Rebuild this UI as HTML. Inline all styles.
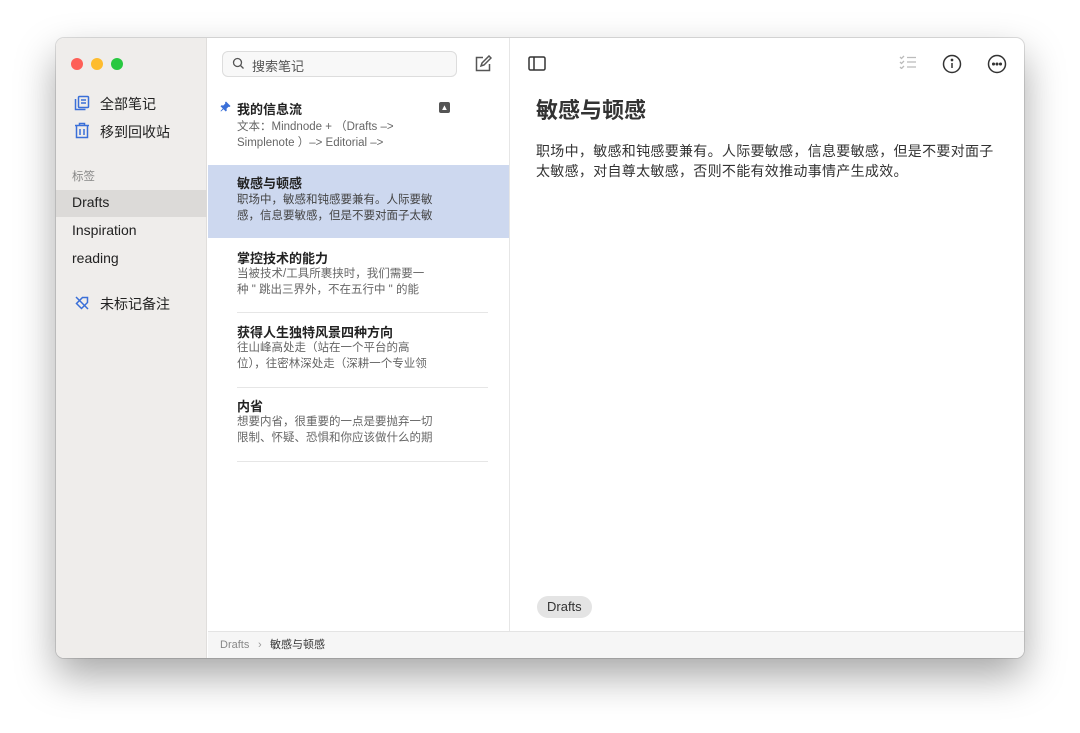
<!DOCTYPE html>
<html><head><meta charset="utf-8"><style>
*{margin:0;padding:0;box-sizing:border-box}
body{width:1080px;height:733px;background:#fff;font-family:"Liberation Sans","Noto Sans CJK SC",sans-serif;position:relative;overflow:hidden;color:#222}
.win{position:absolute;left:56px;top:38px;width:968px;height:620px;border-radius:8px;overflow:hidden;box-shadow:0 18px 40px rgba(0,0,0,.35),0 0 0 1px rgba(0,0,0,.12);background:#fff}
.side{position:absolute;left:0;top:0;width:151px;height:620px;background:#efedeb;border-right:1px solid #e0dedc}
.dot{position:absolute;top:20px;width:12px;height:12px;border-radius:50%}
.abs{position:absolute;white-space:nowrap}
.list{position:absolute;left:152px;top:0;width:302px;height:593px;border-right:1px solid #e6e6e6}
.t{font-size:13px;font-weight:bold;color:#222}
.s{font-size:11.5px;color:#666;line-height:16px}
.hr{position:absolute;left:29px;width:251px;height:1px;background:#e6e6e6}
.foot{position:absolute;left:152px;top:593px;width:816px;height:27px;background:#f6f6f6;border-top:1px solid #e4e4e4;font-size:11px}
.foot span{line-height:26px;top:0}
</style></head><body>
<div class="win">
 <div class="side">
  <div class="dot" style="left:15px;background:#fe5f57"></div>
  <div class="dot" style="left:35px;background:#febc2e"></div>
  <div class="dot" style="left:55px;background:#28c840"></div>
  <svg class="abs" style="left:18px;top:57px" width="16" height="16" viewBox="0 0 16 16" fill="none" stroke="#3a6fd8" stroke-width="1.5"><rect x="4.5" y="1.5" width="10" height="11" rx="1"/><path d="M1.5 4v10.5h10M7 5h5M7 8h5"/></svg>
  <div class="abs" style="left:44px;top:56px;font-size:14px">全部笔记</div>
  <svg class="abs" style="left:18px;top:84px" width="16" height="17" viewBox="0 0 16 17" fill="none" stroke="#3a6fd8" stroke-width="1.5"><path d="M1 3.5h14M5.5 3.5V1.5h5v2M2.5 3.5V15.5h11V3.5M6 7v6M10 7v6"/></svg>
  <div class="abs" style="left:44px;top:84px;font-size:14px">移到回收站</div>
  <div class="abs" style="left:16px;top:130px;font-size:11.5px;color:#888">标签</div>
  <div style="position:absolute;left:0;top:152px;width:151px;height:27px;background:#dcdad8"></div>
  <div class="abs" style="left:16px;top:156px;font-size:14px">Drafts</div>
  <div class="abs" style="left:16px;top:184px;font-size:14px">Inspiration</div>
  <div class="abs" style="left:16px;top:212px;font-size:14px">reading</div>
  <svg class="abs" style="left:18px;top:257px" width="16" height="16" viewBox="0 0 16 16" fill="none" stroke="#3a6fd8" stroke-width="1.5"><path d="M8.5 2.5h5v5l-6 6-5-5zM2 2l12 12"/></svg>
  <div class="abs" style="left:44px;top:256px;font-size:14px">未标记备注</div>
 </div>
 <div class="list">
  <div style="position:absolute;left:14px;top:13px;width:235px;height:26px;border:1px solid #ddd;border-radius:6px;background:#f8f8f8"></div>
  <svg class="abs" style="left:24px;top:19px" width="13" height="13" viewBox="0 0 13 13" fill="none" stroke="#555" stroke-width="1.3"><circle cx="5.5" cy="5.5" r="4"/><path d="M8.5 8.5l3 3"/></svg>
  <div class="abs" style="left:44px;top:18px;font-size:13px;color:#555">搜索笔记</div>
  <svg class="abs" style="left:266px;top:17px" width="18" height="18" viewBox="0 0 18 18" fill="none" stroke="#555" stroke-width="1.5"><path d="M9 2.5H2.5v13h13V9M7 11l1-3 7-7 2 2-7 7z"/></svg>
  <svg class="abs" style="left:12px;top:63px" width="11" height="11" viewBox="0 0 11 11" fill="#3a6fd8"><path d="M6 0.5l4.5 4.5-1 1-1-0.3-2 2 0.3 1.8-1 1-2.3-2.3L1 10.5 0.5 10l2.3-2.5L0.5 5.2l1-1 1.8.3 2-2L5 1.5z"/></svg>
  <div class="abs t" style="left:29px;top:61px">我的信息流</div>
  <div style="position:absolute;left:231px;top:64px;width:11px;height:11px;background:#555;border-radius:2px;color:#fff;font-size:8px;line-height:11px;text-align:center">▲</div>
  <div class="abs s" style="left:29px;top:81px">文本：Mindnode + （Drafts –&gt;<br>Simplenote ）–&gt; Editorial –&gt;</div>
  <div style="position:absolute;left:0;top:127px;width:301px;height:73px;background:#cdd8ef"></div>
  <div class="abs t" style="left:29px;top:135px">敏感与顿感</div>
  <div class="abs s" style="left:29px;top:154px;color:#444">职场中，敏感和钝感要兼有。人际要敏<br>感，信息要敏感，但是不要对面子太敏</div>
  <div class="abs t" style="left:29px;top:210px">掌控技术的能力</div>
  <div class="abs s" style="left:29px;top:228px">当被技术/工具所裹挟时，我们需要一<br>种 " 跳出三界外，不在五行中 " 的能</div>
  <div class="hr" style="top:274px"></div>
  <div class="abs t" style="left:29px;top:284px">获得人生独特风景四种方向</div>
  <div class="abs s" style="left:29px;top:302px">往山峰高处走（站在一个平台的高<br>位），往密林深处走（深耕一个专业领</div>
  <div class="hr" style="top:349px"></div>
  <div class="abs t" style="left:29px;top:358px">内省</div>
  <div class="abs s" style="left:29px;top:376px">想要内省，很重要的一点是要抛弃一切<br>限制、怀疑、恐惧和你应该做什么的期</div>
  <div class="hr" style="top:423px"></div>
 </div>
 <svg class="abs" style="left:472px;top:18px" width="18" height="15" viewBox="0 0 18 15" fill="none" stroke="#333" stroke-width="1.5"><rect x="1" y="1" width="16" height="13" rx="1.5"/><path d="M6 1v13"/></svg>
 <svg class="abs" style="left:843px;top:17px" width="18" height="14" viewBox="0 0 18 14" fill="none" stroke="#bbb" stroke-width="1.3"><path d="M1 2l1.5 1.5L5 1M1 7l1.5 1.5L5 6M1 12l1.5 1.5L5 11M8 2.5h9M8 7h9M8 12h9"/></svg>
 <svg class="abs" style="left:886px;top:16px" width="20" height="20" viewBox="0 0 20 20" fill="none" stroke="#333" stroke-width="1.5"><circle cx="10" cy="10" r="8.5"/><path d="M10 9v5"/><circle cx="10" cy="6" r=".6" fill="#333"/></svg>
 <svg class="abs" style="left:931px;top:16px" width="20" height="20" viewBox="0 0 20 20" fill="none" stroke="#333" stroke-width="1.5"><circle cx="10" cy="10" r="8.5"/><circle cx="6.5" cy="10" r=".8" fill="#333"/><circle cx="10" cy="10" r=".8" fill="#333"/><circle cx="13.5" cy="10" r=".8" fill="#333"/></svg>
 <div class="abs" style="left:480px;top:55px;font-size:22px;font-weight:bold;color:#333">敏感与顿感</div>
 <div class="abs" style="left:480px;top:103px;font-size:14px;letter-spacing:0.3px;line-height:20px;color:#333">职场中，敏感和钝感要兼有。人际要敏感，信息要敏感，但是不要对面子<br>太敏感，对自尊太敏感，否则不能有效推动事情产生成效。</div>
 <div class="abs" style="left:481px;top:558px;height:22px;padding:0 10px;border-radius:11px;background:#e4e4e4;font-size:13px;line-height:22px;color:#333">Drafts</div>
 <div class="foot"><span class="abs" style="left:12px;color:#888">Drafts</span><span class="abs" style="left:50px;color:#999">›</span><span class="abs" style="left:62px;color:#333">敏感与顿感</span></div>
</div>
</body></html>
